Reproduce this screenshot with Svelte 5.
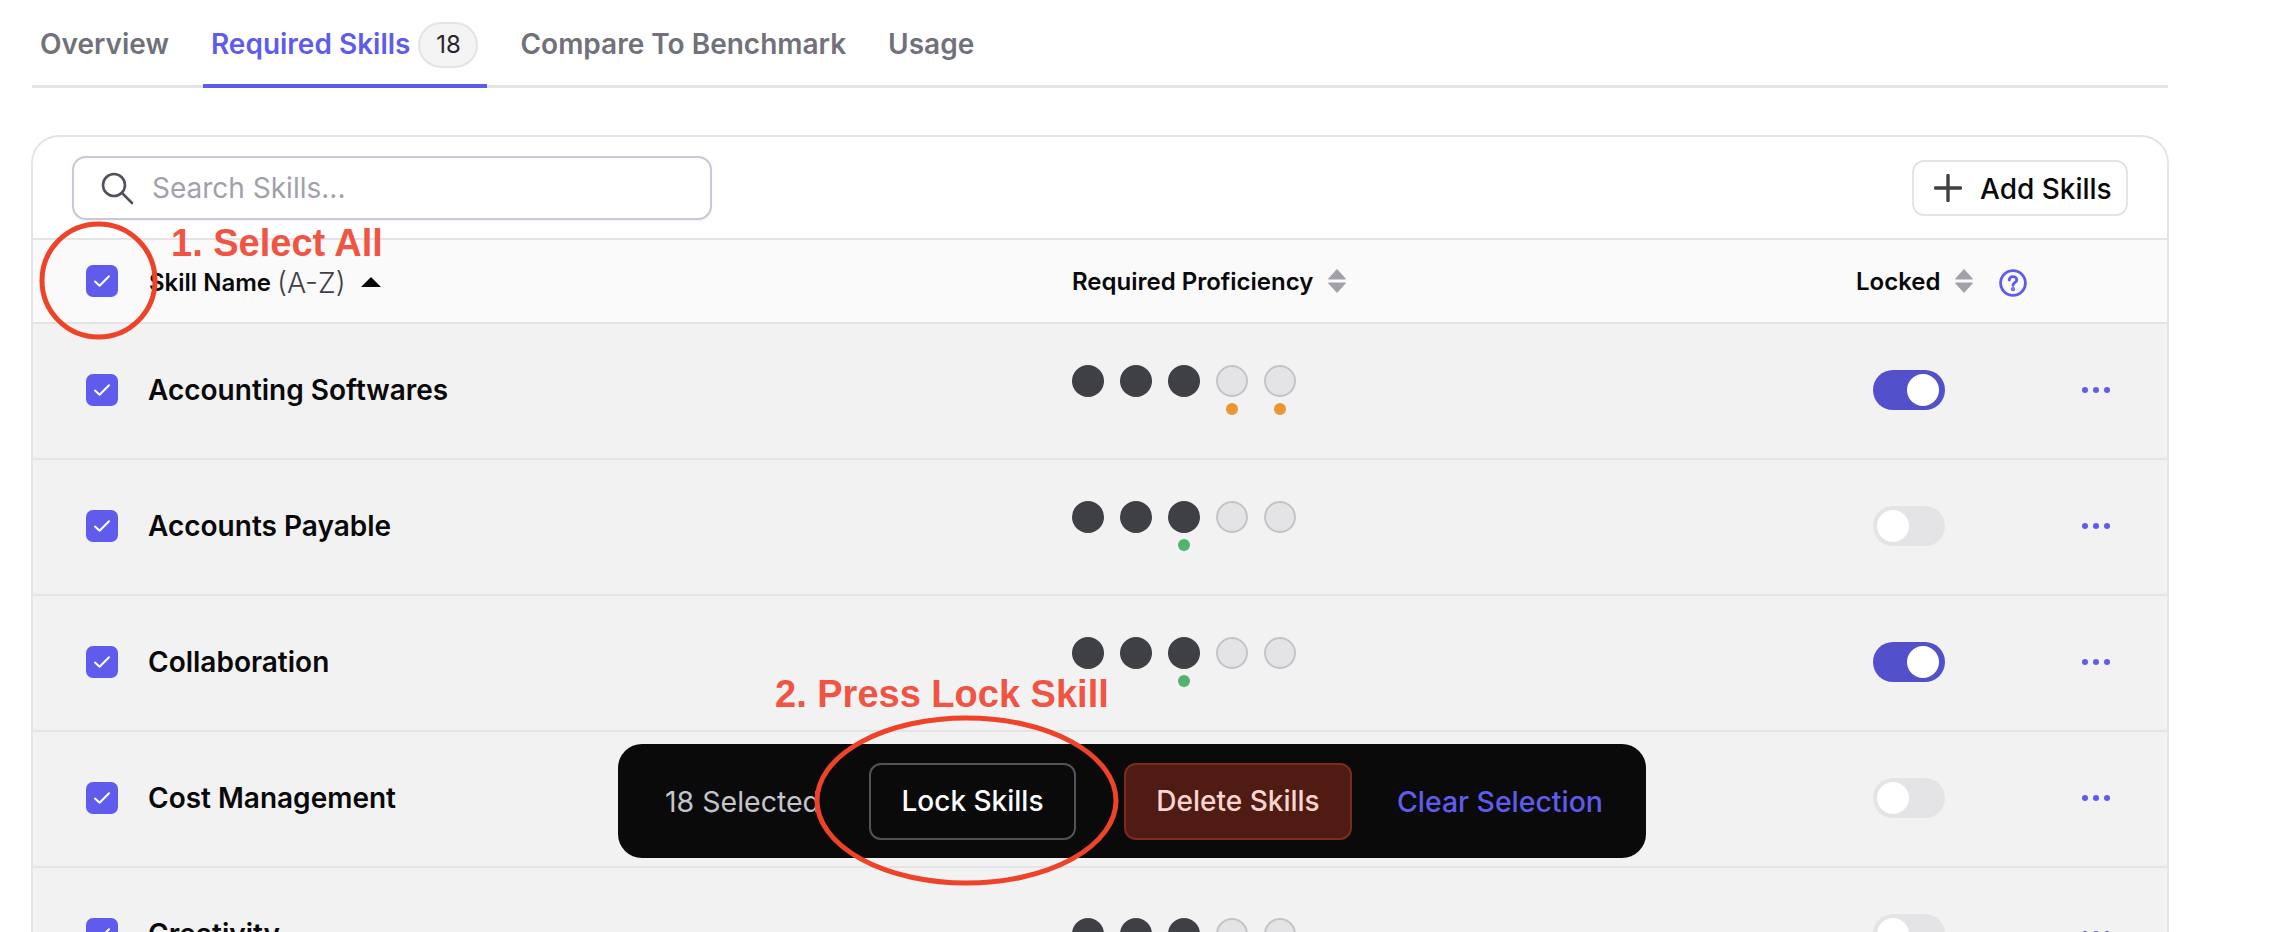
<script lang="ts">
  // Skills table with bulk action bar and tutorial annotations
  interface Skill {
    name: string;
    level: number;
    hints: { index: number; tone: "warn" | "ok" }[];
    locked: boolean;
  }

  const skills: Skill[] = [
    { name: "Accounting Softwares", level: 3, hints: [{ index: 3, tone: "warn" }, { index: 4, tone: "warn" }], locked: true },
    { name: "Accounts Payable", level: 3, hints: [{ index: 2, tone: "ok" }], locked: false },
    { name: "Collaboration", level: 3, hints: [{ index: 2, tone: "ok" }], locked: true },
    { name: "Cost Management", level: 3, hints: [], locked: false },
    { name: "Creativity", level: 3, hints: [], locked: false },
  ];
  const tabs = ["Overview", "Required Skills", "Compare To Benchmark", "Usage"];
  const levels = [0, 1, 2, 3, 4];
</script>

{#snippet check()}
  <span class="check">
    <svg width="18" height="14" viewBox="0 0 18 14" fill="none">
      <path d="M2 7.5 L6.6 11.8 L16 2.2" stroke="#fff" stroke-width="2" stroke-linecap="round" stroke-linejoin="round" />
    </svg>
  </span>
{/snippet}

{#snippet sort()}
  <svg class="sort" width="18" height="24" viewBox="0 0 18 24">
    <path d="M9 0.5 L17.5 10 H0.5 Z M0.5 14 H17.5 L9 23.5 Z" fill="#a1a1aa" stroke="#a1a1aa" stroke-width="1" stroke-linejoin="round" />
  </svg>
{/snippet}

<div class="page">
  <nav class="tabs">
    {#each tabs as tab, i}
      <div class="tab" class:active={i === 1}>
        {tab}
        {#if i === 1}<span class="count">18</span>{/if}
      </div>
    {/each}
  </nav>

  <section class="card">
    <div class="toolbar">
      <div class="search">
        <svg width="36" height="36" viewBox="0 0 36 36" fill="none" stroke="#52525b" stroke-width="2.6" stroke-linecap="round">
          <circle cx="15" cy="15" r="11" />
          <path d="M23 23 L33 33" />
        </svg>
        <span>Search Skills...</span>
      </div>
      <div class="add">
        <svg width="28" height="28" viewBox="0 0 28 28" fill="none" stroke="#3f3f46" stroke-width="3.4" stroke-linecap="round">
          <path d="M14 1.5 V26.5 M1.5 14 H26.5" />
        </svg>
        <span>Add Skills</span>
      </div>
    </div>

    <div class="grid head">
      <div>{@render check()}</div>
      <div class="th first">
        Skill Name <span class="az">(A-Z)</span>
        <svg class="asc" width="20" height="10" viewBox="0 0 20 10"><path d="M10 0 L20 10 H0 Z" fill="#09090b" /></svg>
      </div>
      <div class="th">Required Proficiency {@render sort()}</div>
      <div class="th">
        Locked {@render sort()}
        <svg class="help" width="28" height="28" viewBox="0 0 28 28" fill="none" stroke="#5f5ced" stroke-width="2.8" stroke-linecap="round">
          <circle cx="14" cy="14" r="12.4" />
          <path d="M10.2 11 C10.4 8.8 12 7.6 14 7.6 C16.2 7.6 17.8 9 17.8 10.9 C17.8 13.4 14 13.6 14 16.4" />
          <circle cx="14" cy="20.2" r="0.7" fill="#5f5ced" />
        </svg>
      </div>
      <div></div>
    </div>

    {#each skills as skill}
      <div class="grid row">
        <div>{@render check()}</div>
        <div class="name">{skill.name}</div>
        <div class="level">
          {#each levels as l}
            {@const hint = skill.hints.find((h) => h.index === l)}
            <div class="slot">
              <span class="dot" class:filled={l < skill.level}></span>
              {#if hint}<span class="hint {hint.tone}"></span>{/if}
            </div>
          {/each}
        </div>
        <div><span class="toggle" class:on={skill.locked}><span class="knob"></span></span></div>
        <div class="more"><i></i><i></i><i></i></div>
      </div>
    {/each}
  </section>

  <div class="bulk">
    <span class="selected">18 Selected</span>
    <span class="btn lock">Lock Skills</span>
    <span class="btn del">Delete Skills</span>
    <span class="clear">Clear Selection</span>
  </div>

  <svg class="marks" width="2272" height="932" fill="none" stroke="#ee4328" stroke-width="5">
    <ellipse cx="98.5" cy="280.5" rx="56.5" ry="56.5" />
    <ellipse cx="966.5" cy="800.5" rx="149.5" ry="82.5" />
  </svg>
  <div class="note one">1. Select All</div>
  <div class="note two">2. Press Lock Skill</div>
</div>

<style>
  :global(body) {
    margin: 0;
    background: #fff;
  }
  .page {
    position: relative;
    width: 2272px;
    height: 932px;
    overflow: hidden;
    font-family: Inter, "Liberation Sans", sans-serif;
    color: #09090b;
  }

  /* Tabs */
  .tabs {
    display: flex;
    gap: 26px;
    box-sizing: border-box;
    width: 2136px;
    height: 88px;
    margin-left: 32px;
    padding-top: 20px;
    border-bottom: 3px solid #e4e4e7;
  }
  .tab {
    display: flex;
    align-items: flex-start;
    gap: 8px;
    height: 68px;
    padding: 2px 8px 0;
    font-size: 28px;
    line-height: 44px;
    font-weight: 600;
    color: #71717a;
    white-space: nowrap;
    box-sizing: border-box;
    border-bottom: 4px solid transparent;
  }
  .tab.active {
    margin-right: -1px;
    padding-right: 9px;
    color: #5f5ced;
    border-bottom-color: #5f5ced;
  }
  .count {
    display: flex;
    align-items: center;
    justify-content: center;
    box-sizing: border-box;
    width: 60px;
    height: 46px;
    border: 2px solid #e4e4e7;
    border-radius: 24px;
    background: #f4f4f5;
    color: #27272a;
    font-size: 24px;
    font-weight: 400;
  }

  /* Card */
  .card {
    box-sizing: border-box;
    width: 2138px;
    height: 900px;
    margin: 47px 0 0 31px;
    border: 2px solid #e4e4e7;
    border-radius: 28px 28px 0 0;
    overflow: hidden;
  }
  .toolbar {
    display: flex;
    align-items: flex-start;
    justify-content: space-between;
    box-sizing: border-box;
    height: 101px;
    padding: 19px 39px 0 39px;
  }
  .search {
    display: flex;
    align-items: center;
    gap: 17px;
    box-sizing: border-box;
    width: 640px;
    height: 64px;
    padding-left: 25px;
    border: 2px solid #c9c8d6;
    border-radius: 14px;
    color: #a1a1aa;
    font-size: 28px;
    box-shadow: 0 1px 2px rgba(0, 0, 0, 0.06);
  }
  .add {
    display: flex;
    align-items: center;
    gap: 18px;
    box-sizing: border-box;
    width: 216px;
    height: 56px;
    margin-top: 4px;
    padding-left: 20px;
    border: 2px solid #e4e4e7;
    border-radius: 12px;
    font-size: 28px;
    font-weight: 500;
    white-space: nowrap;
  }
  .add span {
    padding-top: 2px;
  }

  /* Table */
  .grid {
    display: grid;
    grid-template-columns: 63px 923px 784px 226px 1fr;
    align-items: center;
    padding-left: 53px;
    border-top: 2px solid #e4e4e7;
    box-sizing: border-box;
  }
  .head {
    height: 84px;
    background: #fafafa;
  }
  .row {
    height: 136px;
    padding-bottom: 2px;
    background: #f2f2f2;
  }
  .check {
    display: flex;
    align-items: center;
    justify-content: center;
    width: 32px;
    height: 32px;
    border-radius: 7px;
    background: #5f5ced;
  }
  .th {
    display: flex;
    align-items: center;
    gap: 6px;
    font-size: 24px;
    font-weight: 600;
    white-space: nowrap;
  }
  .th.first {
    padding-top: 2px;
  }
  .az {
    font-size: 28.5px;
    font-weight: 300;
    color: #3f3f46;
  }
  .asc {
    margin-left: 9px;
  }
  .sort {
    margin-left: 9px;
  }
  .help {
    margin-left: 20px;
    margin-top: 4px;
  }
  .name {
    font-size: 28px;
    font-weight: 600;
    white-space: nowrap;
    margin-left: -1px;
  }
  .level {
    display: flex;
    gap: 16px;
  }
  .slot {
    display: flex;
    flex-direction: column;
    align-items: center;
    width: 32px;
  }
  .dot {
    box-sizing: border-box;
    width: 32px;
    height: 32px;
    border: 2px solid #c4c4c8;
    border-radius: 50%;
    background: #e4e4e7;
  }
  .dot.filled {
    border: none;
    background: #3f3f46;
  }
  .hint {
    width: 12px;
    height: 12px;
    margin-top: 6px;
    margin-bottom: -18px;
    border-radius: 50%;
  }
  .level:has(.hint) {
    padding-bottom: 18px;
  }
  .hint.warn {
    background: #ea9635;
  }
  .hint.ok {
    background: #52b36e;
  }
  .toggle {
    display: flex;
    box-sizing: border-box;
    width: 72px;
    height: 40px;
    margin-left: 17px;
    padding: 4px;
    border-radius: 20px;
    background: #e4e4e7;
  }
  .toggle.on {
    justify-content: flex-end;
    padding-right: 6px;
    background: #5350cc;
  }
  .knob {
    width: 32px;
    height: 32px;
    border-radius: 50%;
    background: #fff;
  }
  .more {
    display: flex;
    gap: 5px;
  }
  .more i {
    width: 6px;
    height: 6px;
    border-radius: 50%;
    background: #5f5ced;
  }

  /* Bulk action bar floats over the table */
  .bulk {
    position: absolute;
    left: 618px;
    top: 744px;
    display: flex;
    align-items: center;
    box-sizing: border-box;
    width: 1028px;
    height: 114px;
    padding-left: 47px;
    border-radius: 24px;
    background: #0a0a0a;
    font-size: 28px;
    font-weight: 500;
    white-space: nowrap;
  }
  .selected {
    width: 204px;
    color: #c4c4cc;
    font-size: 28.5px;
    font-weight: 400;
  }
  .btn {
    display: flex;
    align-items: center;
    justify-content: center;
    box-sizing: border-box;
    height: 77px;
    border-radius: 12px;
    border: 2px solid;
  }
  .lock {
    width: 207px;
    margin-right: 48px;
    color: #fff;
    border-color: #52525b;
  }
  .del {
    width: 228px;
    margin-right: 45px;
    color: #f9d5cf;
    background: #4f1b13;
    border-color: #7f2a1e;
  }
  .clear {
    color: #5f5ced;
    font-size: 28.4px;
  }

  /* Tutorial annotations */
  .marks {
    position: absolute;
    left: 0;
    top: 0;
  }
  .note {
    position: absolute;
    color: #f05442;
    font-family: "Liberation Sans", Arial, sans-serif;
    font-size: 38px;
    font-weight: 700;
    line-height: 46px;
    white-space: nowrap;
  }
  .one {
    left: 171px;
    top: 220px;
  }
  .two {
    left: 775px;
    top: 671px;
  }
</style>
